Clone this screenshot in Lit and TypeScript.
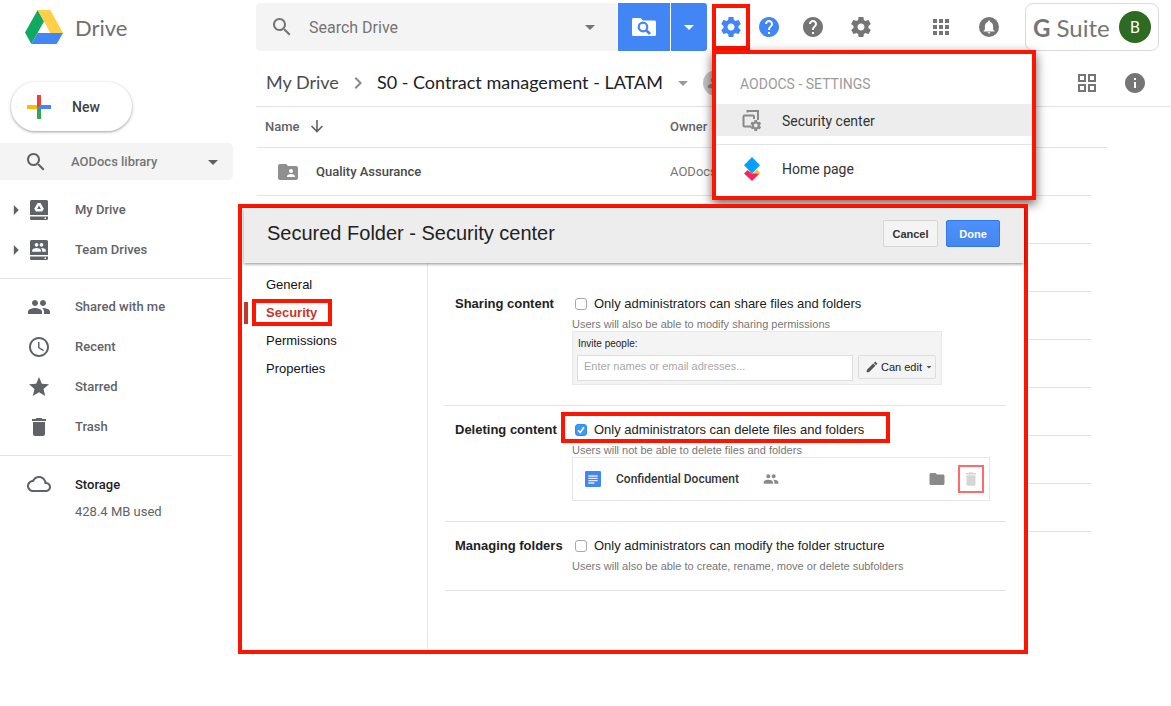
import { LitElement, html, css, svg, nothing, type SVGTemplateResult } from "lit";
import { customElement, property, state } from "lit/decorators.js";
import { classMap } from "lit/directives/class-map.js";

const GEAR =
  "M19.43 12.98c.04-.32.07-.64.07-.98s-.03-.66-.07-.98l2.11-1.65c.19-.15.24-.42.12-.64l-2-3.46c-.12-.22-.39-.3-.61-.22l-2.49 1c-.52-.4-1.08-.73-1.69-.98l-.38-2.65C14.46 2.18 14.25 2 14 2h-4c-.25 0-.46.18-.49.42l-.38 2.65c-.61.25-1.17.59-1.69.98l-2.49-1c-.23-.09-.49 0-.61.22l-2 3.46c-.13.22-.07.49.12.64l2.11 1.65c-.04.32-.07.65-.07.98s.03.66.07.98l-2.11 1.65c-.19.15-.24.42-.12.64l2 3.46c.12.22.39.3.61.22l2.49-1c.52.4 1.08.73 1.69.98l.38 2.65c.03.24.24.42.49.42h4c.25 0 .46-.18.49-.42l.38-2.65c.61-.25 1.17-.59 1.69-.98l2.49 1c.23.09.49 0 .61-.22l2-3.46c.12-.22.07-.49-.12-.64l-2.11-1.65zM12 15.5c-1.93 0-3.5-1.57-3.5-3.5s1.57-3.5 3.5-3.5 3.5 1.57 3.5 3.5-1.57 3.5-3.5 3.5z";
const PEOPLE =
  "M16 11c1.66 0 2.99-1.34 2.99-3S17.66 5 16 5c-1.66 0-3 1.34-3 3s1.34 3 3 3zm-8 0c1.66 0 2.99-1.34 2.99-3S9.66 5 8 5C6.34 5 5 6.34 5 8s1.34 3 3 3zm0 2c-2.33 0-7 1.17-7 3.5V19h14v-2.5c0-2.33-4.67-3.5-7-3.5zm8 0c-.29 0-.62.02-.97.05 1.16.84 1.97 1.97 1.97 3.45V19h6v-2.5c0-2.33-4.67-3.5-7-3.5z";
const FOLDER =
  "M10 4H4c-1.1 0-1.99.9-1.99 2L2 18c0 1.1.9 2 2 2h16c1.1 0 2-.9 2-2V8c0-1.1-.9-2-2-2h-8l-2-2z";

/** Icon shapes, all on a 24 by 24 grid. */
const ICONS: Record<string, SVGTemplateResult> = {
  gear: svg`<path d=${GEAR}/>`,
  people: svg`<path d=${PEOPLE}/>`,
  folder: svg`<path d=${FOLDER}/>`,
  folderShared: svg`<path d=${FOLDER}/><path fill="#fff" d="M15 9c1.1 0 2 .9 2 2s-.9 2-2 2-2-.9-2-2 .9-2 2-2zm4 8h-8v-1c0-1.33 2.67-2 4-2s4 .67 4 2v1z"/>`,
  search: svg`<path d="M15.5 14h-.79l-.28-.27C15.41 12.59 16 11.11 16 9.5 16 5.91 13.09 3 9.5 3S3 5.91 3 9.5 5.91 16 9.5 16c1.61 0 3.09-.59 4.23-1.57l.27.28v.79l5 4.99L20.49 19l-4.99-5zm-6 0C7.01 14 5 11.99 5 9.5S7.01 5 9.5 5 14 7.01 14 9.5 11.99 14 9.5 14z"/>`,
  caret: svg`<path d="M7 10l5 5 5-5z"/>`,
  expand: svg`<path d="M10.800 7l5 5-5 5z"/>`,
  chevron: svg`<path d="M10 6L8.59 7.41 13.17 12l-4.58 4.59L10 18l6-6z"/>`,
  sortDown: svg`<path fill="none" stroke="currentColor" stroke-width="1.600" d="M12 6v11.500M6.500 12l5.500 5.600 5.500-5.600"/>`,
  help: svg`<path d="M12 2C6.48 2 2 6.48 2 12s4.48 10 10 10 10-4.48 10-10S17.52 2 12 2zm1 17h-2v-2h2v2zm2.07-7.75l-.9.92C13.45 12.9 13 13.5 13 15h-2v-.5c0-1.1.45-2.1 1.17-2.83l1.24-1.26c.37-.36.59-.86.59-1.41 0-1.1-.9-2-2-2s-2 .9-2 2H8c0-2.21 1.79-4 4-4s4 1.79 4 4c0 .88-.36 1.68-.93 2.25z"/>`,
  info: svg`<path d="M12 2C6.480 2 2 6.480 2 12s4.480 10 10 10 10-4.480 10-10S17.520 2 12 2zm1 15h-2v-6h2v6zm0-8h-2V7h2v2z"/>`,
  apps: svg`<path d="M4 4h4v4H4zM10 4h4v4h-4zM16 4h4v4h-4zM4 10h4v4H4zM10 10h4v4h-4zM16 10h4v4h-4zM4 16h4v4H4zM10 16h4v4h-4zM16 16h4v4h-4z"/>`,
  bell: svg`<circle cx="12" cy="12" r="10"/><path fill="#fff" d="M12 5.500c.6 0 1 .4 1 1v.4c1.900.5 3.100 2.100 3.100 4.100v3.500l1.300 1.300v.7H6.600v-.7l1.300-1.300V11c0-2 1.200-3.600 3.100-4.100v-.4c0-.6.400-1 1-1zM10.700 17.200h2.600c0 .7-.6 1.300-1.300 1.300s-1.300-.6-1.300-1.300z"/>`,
  grid: svg`<path fill-rule="evenodd" d="M3 3h8v8H3zM5 5v4h4V5zM13 3h8v8h-8zM15 5v4h4V5zM3 13h8v8H3zM5 15v4h4v-4zM13 13h8v8h-8zM15 15v4h4v-4z"/>`,
  clock: svg`<path d="M11.990 2C6.470 2 2 6.480 2 12s4.470 10 9.990 10C17.520 22 22 17.520 22 12S17.520 2 11.990 2zM12 20c-4.420 0-8-3.580-8-8s3.580-8 8-8 8 3.580 8 8-3.580 8-8 8z"/><path d="M12.500 7H11v6l5.250 3.150.75-1.230-4.500-2.670z"/>`,
  star: svg`<path d="M12 17.270L18.180 21l-1.640-7.030L22 9.240l-7.190-.61L12 2 9.190 8.630 2 9.240l5.460 4.730L5.820 21z"/>`,
  trash: svg`<path d="M6 19c0 1.100.9 2 2 2h8c1.100 0 2-.9 2-2V7H6v12zM19 4h-3.500l-1-1h-5l-1 1H5v2h14V4z"/>`,
  cloud: svg`<path d="M19.350 10.040C18.670 6.590 15.640 4 12 4 9.110 4 6.600 5.640 5.350 8.040 2.340 8.360 0 10.910 0 14c0 3.310 2.690 6 6 6h13c2.760 0 5-2.240 5-5 0-2.640-2.050-4.780-4.650-4.960zM19 18H6c-2.210 0-4-1.790-4-4s1.790-4 4-4h.71C7.370 7.690 9.480 6 12 6c3.040 0 5.500 2.460 5.500 5.500v.5H19c1.660 0 3 1.340 3 3s-1.340 3-3 3z"/>`,
  pencil: svg`<path d="M3 17.250V21h3.750L17.810 9.940l-3.750-3.750L3 17.250zM20.710 7.040c.39-.39.39-1.020 0-1.410l-2.340-2.340c-.39-.39-1.020-.39-1.410 0l-1.830 1.830 3.750 3.750 1.830-1.830z"/>`,
  myDrive: svg`<path fill-rule="evenodd" d="M4.500 2h15A1.500 1.500 0 0 1 21 3.500V17H3V3.500A1.500 1.500 0 0 1 4.500 2zM10.600 5L7.300 10.800 8.900 13.600H15.200L16.800 10.800 13.500 5zM12 7.600L13.900 11H10.200z"/><path fill-rule="evenodd" d="M3 18.500h18v2A1.500 1.500 0 0 1 19.500 22h-15A1.500 1.500 0 0 1 3 20.500zM17.500 19.500v1.500h1.500v-1.500z"/>`,
  teamDrives: svg`<path d="M4.500 2h15A1.500 1.500 0 0 1 21 3.500V17H3V3.500A1.500 1.500 0 0 1 4.500 2z"/><path fill="#fff" transform="translate(4.600 1.900) scale(.62)" d=${PEOPLE}/><path fill-rule="evenodd" d="M3 18.500h18v2A1.500 1.500 0 0 1 19.500 22h-15A1.500 1.500 0 0 1 3 20.500zM17.500 19.500v1.500h1.500v-1.500z"/>`,
  folderSearch: svg`<path fill="#fff" d="M0 4.500C0 3.700.7 3 1.500 3H8.500L11 5.500H22.500C23.300 5.500 24 6.200 24 7V19.500C24 20.300 23.300 21 22.500 21H1.500C.7 21 0 20.300 0 19.500z"/><circle cx="11" cy="12" r="4.300" fill="none" stroke="#4285f4" stroke-width="2.200"/><path stroke="#4285f4" stroke-width="2.600" d="M14 15l4 4"/>`,
  security: svg`<path fill="none" stroke="currentColor" stroke-width="2" d="M7.500 3.500V2H18v9M11 17.500H4.500A1 1 0 0 1 3.500 16.500V7.500A1 1 0 0 1 4.500 6.500H13a1 1 0 0 1 1 1V10"/><path transform="translate(9.300 10) scale(.54)" d=${GEAR}/>`,
  home: svg`<path fill="#ffc629" d="M12 17l5-4.500 3 3-1 1z"/><path fill="#ff2456" d="M4 16.500L7.500 13 12 16.500H19.500L12 24z"/><path fill="#03a0ff" d="M12 0l8 8.300-8 8.200-8-8.200z"/>`,
  doc: svg`<rect x="0" y="0" width="24" height="24" rx="2" fill="#4285f4"/><path stroke="#dfe9fd" stroke-width="2" d="M5 7.500h14M5 11h14M5 14.500h14M5 18h9"/>`,
};

@customElement("ui-icon")
class UiIcon extends LitElement {
  @property() name = "";
  @property({ type: Number }) size = 24;

  static styles = css`
    :host {
      display: inline-flex;
      flex: none;
    }
    svg {
      display: block;
      fill: currentColor;
    }
  `;

  render() {
    return html`<svg viewBox="0 0 24 24" width=${this.size} height=${this.size} aria-hidden="true">
      ${ICONS[this.name]}
    </svg>`;
  }
}

@customElement("app-header")
class AppHeader extends LitElement {
  @state() menuOpen = true;

  static styles = css`
    :host {
      display: flex;
      align-items: flex-start;
      height: 51px;
      box-sizing: border-box;
      padding: 3px 12px 0 0;
      font-family: Roboto, sans-serif;
      color: #757575;
    }
    button {
      border: 0;
      padding: 0;
      background: none;
      color: inherit;
      display: inline-flex;
      align-items: center;
      justify-content: center;
      font: inherit;
      cursor: pointer;
    }
    .brand {
      display: flex;
      align-items: center;
      gap: 12px;
      width: 231px;
      height: 48px;
      padding-left: 25px;
      flex: none;
      color: #6f6f6f;
      font-family: Lato, sans-serif;
      font-size: 22px;
      text-decoration: none;
    }
    .search {
      display: flex;
      flex: 1;
      min-width: 0;
      height: 48px;
    }
    .field {
      display: flex;
      align-items: center;
      flex: 1;
      min-width: 0;
      margin-right: 1px;
      padding: 0 15px 0 14px;
      background: #f4f4f4;
      border-radius: 4px 0 0 4px;
    }
    .field input {
      flex: 1;
      min-width: 0;
      margin: 0 15px;
      padding: 0;
      border: 0;
      outline: 0;
      background: none;
      font: 16px Roboto, sans-serif;
      color: #757575;
    }
    .field input::placeholder {
      color: #757575;
      opacity: 1;
    }
    .blue {
      width: 52px;
      background: #4285f4;
      color: #fff;
    }
    .blue.narrow {
      width: 36px;
      margin-left: 1px;
      border-radius: 0 3px 3px 0;
    }
    .tools {
      display: flex;
      align-items: center;
      flex: none;
      height: 48px;
      margin-left: 5px;
    }
    .settings {
      position: relative;
      align-self: flex-start;
      margin-top: 1px;
    }
    .settings > button {
      width: 38px;
      height: 46px;
      border: 4px solid #ff1400;
      box-sizing: border-box;
      color: #4285f4;
    }
    .help-blue {
      margin-left: 7px;
      color: #4285f4;
    }
    .help {
      margin-left: 20px;
    }
    .next {
      margin-left: 24px;
    }
    .apps {
      margin-left: 56px;
    }
    .suite {
      display: flex;
      align-items: center;
      justify-content: space-between;
      box-sizing: border-box;
      width: 134px;
      height: 48px;
      margin-left: 24px;
      padding: 0 7px;
      border: 1px solid #dadada;
      border-radius: 8px;
      font-family: Lato, sans-serif;
      font-size: 24px;
      white-space: nowrap;
    }
    .avatar {
      width: 32px;
      height: 32px;
      border-radius: 50%;
      background: #2d6a22;
      color: #fff;
      font-family: Roboto, sans-serif;
      font-size: 16px;
    }
    .menu {
      position: absolute;
      top: 46px;
      left: 0;
      width: 324px;
      height: 150px;
      box-sizing: border-box;
      border: 4px solid #ff1400;
      background: #fff;
      box-shadow: 0 4px 10px rgba(0, 0, 0, 0.6);
      font-size: 14px;
      color: #333;
    }
    .menu h2 {
      margin: 0;
      padding: 20px 24px 10px;
      font-size: 14px;
      line-height: 20px;
      font-weight: 400;
      color: #9b9b9b;
    }
    .menu a {
      display: flex;
      align-items: center;
      gap: 18px;
      box-sizing: border-box;
      height: 32px;
      padding: 0 24px;
      color: #333;
      text-decoration: none;
    }
    .menu a.active {
      padding-top: 2px;
      background: #ededed;
    }
    .menu a.active ui-icon {
      color: #8a8a8a;
    }
    .menu hr {
      margin: 8px 0;
      border: 0;
      border-top: 1px solid #e3e3e3;
    }
  `;

  render() {
    return html`
      <a class="brand" href="#">
        <svg width="38" height="34" viewBox="0 0 38 34" aria-hidden="true">
          <path fill="#11a861" d="M12.700 0L0 22.500 6.300 34 19 11.500z" />
          <path fill="#ffcf48" d="M12.700 0H25.300L38 23H25.300z" />
          <path fill="#4285f4" d="M12.600 23H38L31.700 34H6.300z" />
        </svg>
        <span>Drive</span>
      </a>
      <form class="search" role="search" @submit=${(e: Event) => e.preventDefault()}>
        <div class="field">
          <ui-icon name="search"></ui-icon>
          <input type="text" placeholder="Search Drive" aria-label="Search Drive" />
          <button type="button" aria-label="Search options"><ui-icon name="caret"></ui-icon></button>
        </div>
        <button class="blue" type="submit" aria-label="Search folders"><ui-icon name="folderSearch"></ui-icon></button>
        <button class="blue narrow" type="button" aria-label="More searches"><ui-icon name="caret"></ui-icon></button>
      </form>
      <div class="tools">
        <div class="settings">
          <button aria-label="AODocs settings" @click=${() => (this.menuOpen = !this.menuOpen)}>
            <ui-icon name="gear"></ui-icon>
          </button>
          ${this.menuOpen
            ? html`<nav class="menu">
                <h2>AODOCS - SETTINGS</h2>
                <a class="active" href="#security"><ui-icon name="security"></ui-icon>Security center</a>
                <hr />
                <a href="#home"><ui-icon name="home"></ui-icon>Home page</a>
              </nav>`
            : nothing}
        </div>
        <button class="help-blue" aria-label="AODocs help"><ui-icon name="help"></ui-icon></button>
        <button class="help" aria-label="Help"><ui-icon name="help"></ui-icon></button>
        <button class="next" aria-label="Settings"><ui-icon name="gear"></ui-icon></button>
        <button class="apps" aria-label="Apps"><ui-icon name="apps"></ui-icon></button>
        <button class="next" aria-label="Notifications"><ui-icon name="bell"></ui-icon></button>
        <div class="suite">
          <span><b>G</b> Suite</span>
          <button class="avatar" aria-label="Account B">B</button>
        </div>
      </div>
    `;
  }
}

const PLACES = [
  { label: "My Drive", icon: "myDrive", expandable: true },
  { label: "Team Drives", icon: "teamDrives", expandable: true },
];
const VIEWS = [
  { label: "Shared with me", icon: "people", expandable: false },
  { label: "Recent", icon: "clock", expandable: false },
  { label: "Starred", icon: "star", expandable: false },
  { label: "Trash", icon: "trash", expandable: false },
];

@customElement("app-sidebar")
class AppSidebar extends LitElement {
  static styles = css`
    :host {
      display: block;
      padding-top: 31px;
      font: 500 13px Roboto, sans-serif;
      color: #5f6368;
    }
    .new {
      display: flex;
      align-items: center;
      gap: 21px;
      width: 121px;
      height: 49px;
      margin-left: 11px;
      padding: 0 0 0 16px;
      border: 0;
      border-radius: 25px;
      background: #fff;
      box-shadow: 0 1px 3px rgba(60, 64, 67, 0.5);
      font: 500 14px Roboto, sans-serif;
      color: #3c4043;
    }
    .library {
      display: flex;
      align-items: center;
      height: 37px;
      margin: 12px 23px 10px 0;
      padding: 0 8px 0 24px;
      border-radius: 0 5px 5px 0;
      background: #f4f4f4;
      color: #616161;
    }
    .library select {
      flex: 1;
      min-width: 0;
      margin: 0 0 0 23px;
      padding: 0;
      border: 0;
      appearance: none;
      background: none;
      font: inherit;
      color: #757575;
    }
    nav {
      padding-bottom: 8px;
      margin: 0 24px 8px 0;
      border-bottom: 1px solid #e3e3e3;
    }
    .item {
      display: grid;
      grid-template-columns: 24px 24px 1fr;
      align-items: center;
      height: 40px;
      padding-left: 3px;
      color: inherit;
      text-decoration: none;
    }
    .item span {
      grid-column: 3;
      padding: 0 0 2px 24px;
    }
    .item .mark {
      grid-column: 2;
    }
    .item .expand {
      grid-column: 1;
      grid-row: 1;
      justify-self: center;
    }
    .item .strong {
      padding-bottom: 0;
      color: #202124;
    }
    .used {
      margin: 0;
      padding-left: 75px;
      font-weight: 400;
      line-height: 16px;
    }
  `;

  private item(entry: { label: string; icon: string; expandable: boolean }) {
    return html`<a class="item" href="#">
      ${entry.expandable ? html`<ui-icon class="expand" name="expand"></ui-icon>` : nothing}
      <ui-icon class="mark" name=${entry.icon}></ui-icon>
      <span>${entry.label}</span>
    </a>`;
  }

  render() {
    return html`
      <button class="new">
        <svg width="24" height="24" viewBox="0 0 24 24" aria-hidden="true">
          <path fill="#ea4335" d="M10 0h4v10l-4 4z" />
          <path fill="#fbbc04" d="M0 10h10v4H0z" />
          <path fill="#34a853" d="M10 14l4-4v14h-4z" />
          <path fill="#4285f4" d="M14 10h10v4H10z" />
        </svg>
        New
      </button>
      <div class="library">
        <ui-icon name="search"></ui-icon>
        <select aria-label="Library">
          <option>AODocs library</option>
        </select>
        <ui-icon name="caret"></ui-icon>
      </div>
      <nav>${PLACES.map((p) => this.item(p))}</nav>
      <nav>${VIEWS.map((v) => this.item(v))}</nav>
      <a class="item" href="#">
        <ui-icon class="mark" name="cloud"></ui-icon>
        <span class="strong">Storage</span>
      </a>
      <p class="used">428.4 MB used</p>
    `;
  }
}

@customElement("file-browser")
class FileBrowser extends LitElement {
  static styles = css`
    :host {
      display: block;
      min-width: 0;
      font-family: Roboto, sans-serif;
      color: #757575;
    }
    .path {
      display: flex;
      align-items: center;
      height: 47px;
      padding: 8px 24px 0 10px;
      border-bottom: 1px solid #e3e3e3;
      font-family: Lato, sans-serif;
      font-size: 18px;
      white-space: nowrap;
    }
    .path a {
      padding-bottom: 2px;
      color: #4a4d51;
      text-decoration: none;
    }
    .path ui-icon.chevron {
      margin: 0 7px;
      color: #8a8a8a;
    }
    .path a.current {
      color: #202124;
    }
    .path button {
      display: inline-flex;
      padding: 0;
      border: 0;
      background: none;
      color: inherit;
    }
    .path .down {
      margin-left: 8px;
      color: #9a9a9a;
    }
    .person {
      display: flex;
      align-items: center;
      justify-content: center;
      width: 26px;
      height: 26px;
      margin-left: 8px;
      border-radius: 50%;
      background: #c4c4c4;
      color: #8a8a8a;
    }
    .views {
      display: flex;
      gap: 24px;
      margin-left: auto;
    }
    table {
      width: calc(100% - 65px);
      margin-left: 1px;
      border-collapse: separate;
      border-spacing: 0;
      table-layout: fixed;
      font-size: 13px;
    }
    th,
    td {
      padding: 0;
      border-bottom: 1px solid #e3e3e3;
      text-align: left;
    }
    th {
      box-sizing: border-box;
      height: 41px;
      padding-bottom: 2px;
      font-weight: 500;
      color: #5f6368;
    }
    td {
      height: 47px;
    }
    .owner {
      width: 421px;
    }
    .edge {
      width: 16px;
    }
    td.edge {
      border-bottom: 0;
    }
    .name {
      display: flex;
      align-items: center;
    }
    th .name {
      gap: 5px;
      padding-left: 8px;
    }
    td .name {
      gap: 16px;
      padding-left: 19px;
      font-weight: 500;
      color: #4a4a4a;
    }
    td ui-icon {
      color: #8f8f8f;
    }
  `;

  render() {
    const emptyRows = Array.from({ length: 7 });
    return html`
      <div class="path">
        <a href="#">My Drive</a>
        <ui-icon class="chevron" name="chevron"></ui-icon>
        <a class="current" href="#">S0 - Contract management - LATAM</a>
        <button class="down" aria-label="Folder actions"><ui-icon name="caret"></ui-icon></button>
        <span class="person"><ui-icon name="people" size="18"></ui-icon></span>
        <div class="views">
          <button aria-label="Grid view"><ui-icon name="grid"></ui-icon></button>
          <button aria-label="Details"><ui-icon name="info"></ui-icon></button>
        </div>
      </div>
      <table>
        <thead>
          <tr>
            <th><div class="name">Name <ui-icon name="sortDown"></ui-icon></div></th>
            <th class="owner">Owner</th>
            <th class="edge"></th>
          </tr>
        </thead>
        <tbody>
          <tr>
            <td><div class="name"><ui-icon name="folderShared"></ui-icon>Quality Assurance</div></td>
            <td class="owner">AODocs</td>
            <td class="edge"></td>
          </tr>
          ${emptyRows.map(() => html`<tr><td></td><td class="owner"></td><td class="edge"></td></tr>`)}
        </tbody>
      </table>
    `;
  }
}

const TABS = ["General", "Security", "Permissions", "Properties"];

@customElement("security-dialog")
class SecurityDialog extends LitElement {
  @state() tab = "Security";

  static styles = css`
    :host {
      display: flex;
      flex-direction: column;
      box-sizing: border-box;
      border: 4px solid #ff1400;
      background: #fff;
      font-family: "Liberation Sans", Arial, sans-serif;
      font-size: 13px;
      color: #222;
    }
    header {
      position: relative;
      display: flex;
      align-items: center;
      gap: 8px;
      height: 55px;
      margin-left: 2px;
      padding: 0 24px 4px 23px;
      box-sizing: border-box;
      background: #ededed;
      box-shadow: 0 1px 3px rgba(0, 0, 0, 0.45);
    }
    h1 {
      flex: 1;
      margin: 0;
      font-size: 20px;
      font-weight: 400;
    }
    header button {
      height: 27px;
      padding: 0;
      width: 55px;
      border: 1px solid #d6d6d6;
      border-radius: 2px;
      background: #f4f4f4;
      font: bold 11px "Liberation Sans", Arial, sans-serif;
      color: #333;
    }
    header button.done {
      width: 54px;
      border-color: #3079ed;
      background: linear-gradient(#4d90fe, #4787ed);
      color: #fff;
    }
    .body {
      display: grid;
      grid-template-columns: 186px 1fr;
      flex: 1;
    }
    nav {
      display: flex;
      flex-direction: column;
      align-items: flex-start;
      padding: 8px 0 0 2px;
      border-right: 1px solid #e8e8e8;
    }
    nav a {
      position: relative;
      box-sizing: border-box;
      height: 28px;
      padding-left: 22px;
      line-height: 28px;
      color: #111;
      text-decoration: none;
    }
    nav a.active {
      border-left: 4px solid #c5372c;
      height: 22px;
      margin: 3px 0;
      padding-left: 18px;
      line-height: 22px;
      font-weight: bold;
      color: #c5372c;
    }
    /* Red frame drawn over the highlighted option. */
    .active::after,
    .framed::after {
      content: "";
      position: absolute;
      border: 4px solid #ff1400;
      pointer-events: none;
    }
    .active::after {
      inset: -3px -15px -2px 4px;
    }
    .framed::after {
      inset: -9px -26px -4px -11px;
    }
    .sections {
      padding: 17px 18px 0 17px;
    }
    section {
      display: grid;
      grid-template-columns: 117px 1fr;
      padding: 15px 16px 20px 10px;
      border-bottom: 1px solid #e3e3e3;
    }
    section.last {
      padding-bottom: 17px;
    }
    h2 {
      margin: 0;
      font-size: 13px;
      line-height: 18px;
      white-space: nowrap;
    }
    .option {
      position: relative;
      display: inline-flex;
      align-items: center;
      gap: 7px;
      padding-left: 3px;
      line-height: 18px;
    }
    .option input {
      appearance: none;
      box-sizing: border-box;
      width: 12px;
      height: 12px;
      margin: 0;
      border: 1px solid #a9a9a9;
      border-radius: 3px;
      background: #fff;
    }
    .option input:checked {
      border-color: #2f8cf6;
      background: #3b99fc
        url("data:image/svg+xml,%3Csvg xmlns='http://www.w3.org/2000/svg' viewBox='0 0 10 10'%3E%3Cpath fill='none' stroke='white' stroke-width='1.6' d='M2 5.300l2.200 2.300L8 2.200'/%3E%3C/svg%3E")
        center / 10px;
    }
    .note {
      margin: 4px 0 0;
      font-size: 11px;
      line-height: 14px;
      color: #777;
    }
    .invite {
      display: grid;
      grid-template-columns: 276px 78px;
      column-gap: 5px;
      justify-content: start;
      box-sizing: border-box;
      max-width: 370px;
      height: 54px;
      padding: 2px 4px;
      border: 1px solid #e9e9e9;
      background: #f4f4f4;
      font-size: 10px;
    }
    .invite label {
      grid-column: 1 / 3;
      padding-left: 1px;
      line-height: 19px;
    }
    .invite input {
      box-sizing: border-box;
      width: 100%;
      height: 26px;
      padding: 0 6px 3px;
      border: 1px solid #dedede;
      outline: 0;
      font: 11px "Liberation Sans", Arial, sans-serif;
    }
    .invite input::placeholder {
      color: #a8a8a8;
      opacity: 1;
    }
    .access {
      display: flex;
      align-items: center;
      box-sizing: border-box;
      height: 24px;
      padding: 0 0 0 6px;
      border: 1px solid #dedede;
      border-radius: 2px;
      color: #555;
    }
    .access select {
      flex: 1;
      min-width: 0;
      margin-left: 2px;
      padding: 0;
      border: 0;
      appearance: none;
      background: none;
      font: 11px "Liberation Sans", Arial, sans-serif;
      color: #222;
    }
    .file {
      display: flex;
      align-items: center;
      box-sizing: border-box;
      height: 44px;
      padding: 0 5px 0 12px;
      border: 1px solid #e6e6e6;
      font: 500 12px Roboto, sans-serif;
      color: #8a8a8a;
    }
    .file span {
      margin: 0 24px 0 15px;
      color: #333;
    }
    .file button {
      display: flex;
      align-items: center;
      justify-content: center;
      padding: 0;
      border: 0;
      background: none;
      color: inherit;
    }
    .file .move {
      margin-left: auto;
    }
    .file .remove {
      width: 26px;
      height: 28px;
      margin-left: 12px;
      border: 2px solid #ff6b6b;
      color: #d6d6d6;
    }
  `;

  render() {
    return html`
      <header>
        <h1>Secured Folder - Security center</h1>
        <button>Cancel</button>
        <button class="done">Done</button>
      </header>
      <div class="body">
        <nav>
          ${TABS.map(
            (t) => html`<a
              href="#"
              class=${classMap({ active: t === this.tab })}
              @click=${(e: Event) => {
                e.preventDefault();
                this.tab = t;
              }}
              >${t}</a
            >`
          )}
        </nav>
        <div class="sections">
          <section>
            <h2>Sharing content</h2>
            <div>
              <label class="option"><input type="checkbox" />Only administrators can share files and folders</label>
              <p class="note">Users will also be able to modify sharing permissions</p>
              <div class="invite">
                <label for="people">Invite people:</label>
                <input id="people" type="text" placeholder="Enter names or email adresses..." />
                <div class="access">
                  <ui-icon name="pencil" size="14"></ui-icon>
                  <select aria-label="Access level">
                    <option>Can edit</option>
                  </select>
                  <ui-icon name="caret" size="12"></ui-icon>
                </div>
              </div>
            </div>
          </section>
          <section>
            <h2>Deleting content</h2>
            <div>
              <label class="option framed"
                ><input type="checkbox" checked />Only administrators can delete files and folders</label
              >
              <p class="note">Users will not be able to delete files and folders</p>
              <div class="file">
                <ui-icon name="doc" size="16"></ui-icon>
                <span>Confidential Document</span>
                <ui-icon name="people" size="16"></ui-icon>
                <button class="move" aria-label="Move"><ui-icon name="folder" size="18"></ui-icon></button>
                <button class="remove" aria-label="Delete"><ui-icon name="trash" size="18"></ui-icon></button>
              </div>
            </div>
          </section>
          <section class="last">
            <h2>Managing folders</h2>
            <div>
              <label class="option"><input type="checkbox" />Only administrators can modify the folder structure</label>
              <p class="note">Users will also be able to create, rename, move or delete subfolders</p>
            </div>
          </section>
        </div>
      </div>
    `;
  }
}

@customElement("app-root")
class AppRoot extends LitElement {
  static styles = css`
    :host {
      display: block;
      position: relative;
      min-height: 100vh;
      background: #fff;
    }
    .columns {
      display: grid;
      grid-template-columns: 256px 1fr;
    }
    .dialog {
      position: absolute;
      top: 204px;
      left: 238px;
      right: 143px;
      min-height: 450px;
      z-index: 2;
    }
    .header {
      position: relative;
      z-index: 1;
    }
  `;

  render() {
    return html`
      <app-header class="header"></app-header>
      <div class="columns">
        <app-sidebar></app-sidebar>
        <file-browser></file-browser>
      </div>
      <security-dialog class="dialog" role="dialog" aria-label="Security center"></security-dialog>
    `;
  }
}
